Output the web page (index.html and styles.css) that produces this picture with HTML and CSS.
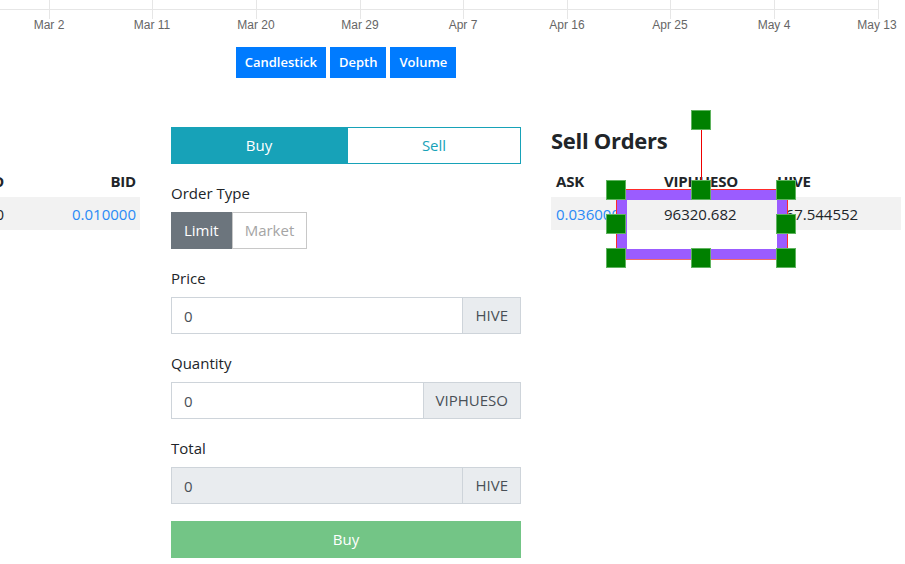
FILE: index.html
```html
<!DOCTYPE html>
<html lang="en">

<head>
    <meta charset="UTF-8">
    <meta name="viewport" content="width=device-width, initial-scale=1.0">
    <title>Market - VIPHUESO</title>
    <link rel="stylesheet" href="styles.css">
</head>

<body>
    <!-- 图表底部的时间轴 -->
    <svg class="chart-axis" width="905" height="36" viewBox="0 0 905 36">
        <g stroke="#e6e6e6" stroke-width="1">
            <line x1="0" y1="9.5" x2="879" y2="9.5" />
            <line x1="49.5" y1="0" x2="49.5" y2="19" />
            <line x1="152.5" y1="0" x2="152.5" y2="19" />
            <line x1="256.5" y1="0" x2="256.5" y2="19" />
            <line x1="360.5" y1="0" x2="360.5" y2="19" />
            <line x1="463.5" y1="0" x2="463.5" y2="19" />
            <line x1="567.5" y1="0" x2="567.5" y2="19" />
            <line x1="670.5" y1="0" x2="670.5" y2="19" />
            <line x1="774.5" y1="0" x2="774.5" y2="19" />
            <line x1="878.5" y1="0" x2="878.5" y2="19" />
        </g>
        <g class="axis-label" text-anchor="middle">
            <text x="49" y="29">Mar 2</text>
            <text x="152" y="29">Mar 11</text>
            <text x="256" y="29">Mar 20</text>
            <text x="360" y="29">Mar 29</text>
            <text x="463" y="29">Apr 7</text>
            <text x="567" y="29">Apr 16</text>
            <text x="670" y="29">Apr 25</text>
            <text x="774" y="29">May 4</text>
            <text x="877" y="29">May 13</text>
        </g>
    </svg>

    <div class="chart-tabs">
        <a href="javascript:;">Candlestick</a>
        <a href="javascript:;">Depth</a>
        <a href="javascript:;">Volume</a>
    </div>

    <div class="market">
        <!-- 买单 -->
        <div class="book">
            <h4>Buy Orders</h4>
            <table class="book-table buy">
                <thead>
                    <tr><th>HIVE</th><th>VIPHUESO</th><th>BID</th></tr>
                </thead>
                <tbody>
                    <tr><td>10.000000</td><td>1000.000</td><td class="price">0.010000</td></tr>
                </tbody>
            </table>
        </div>

        <!-- 下单表单 -->
        <div class="trade">
            <div class="side-toggle">
                <a href="javascript:;" class="active">Buy</a>
                <a href="javascript:;">Sell</a>
            </div>
            <div class="field">
                <label>Order Type</label>
                <div class="type-group">
                    <a href="javascript:;" class="active">Limit</a>
                    <a href="javascript:;">Market</a>
                </div>
            </div>
            <div class="field">
                <label>Price</label>
                <div class="input-group">
                    <input type="text" value="0">
                    <span>HIVE</span>
                </div>
            </div>
            <div class="field">
                <label>Quantity</label>
                <div class="input-group">
                    <input type="text" value="0">
                    <span>VIPHUESO</span>
                </div>
            </div>
            <div class="field">
                <label>Total</label>
                <div class="input-group">
                    <input type="text" value="0" disabled>
                    <span>HIVE</span>
                </div>
            </div>
            <a href="javascript:;" class="submit">Buy</a>
        </div>

        <!-- 卖单 -->
        <div class="book sell-book">
            <h4>Sell Orders</h4>
            <table class="book-table sell">
                <thead>
                    <tr><th>ASK</th><th>VIPHUESO</th><th>HIVE</th></tr>
                </thead>
                <tbody>
                    <tr><td class="price">0.036000</td><td>96320.682</td><td>467.544552</td></tr>
                </tbody>
            </table>
        </div>
    </div>

    <!-- 编辑器选中框 -->
    <div class="rotate-line"></div>
    <div class="selection"><div class="selection-inner"></div></div>
    <div class="handle h-rotate"></div>
    <div class="handle h-tl"></div>
    <div class="handle h-tc"></div>
    <div class="handle h-tr"></div>
    <div class="handle h-ml"></div>
    <div class="handle h-mr"></div>
    <div class="handle h-bl"></div>
    <div class="handle h-bc"></div>
    <div class="handle h-br"></div>
</body>

</html>
```

FILE: styles.css
```css
* {
    margin: 0;
    padding: 0;
    box-sizing: border-box;
}

body {
    width: 905px;
    height: 564px;
    overflow: hidden;
    font-family: "Open Sans", "Noto Sans", sans-serif;
    font-size: 15px;
    color: #212529;
    background-color: #fff;
}

a {
    text-decoration: none;
    color: inherit;
}

.chart-axis {
    display: block;
}

.axis-label {
    font-family: "Liberation Sans", Arial, sans-serif;
    font-size: 12px;
    fill: #666;
}

.chart-tabs {
    display: flex;
    justify-content: center;
    gap: 4px;
    width: 350px;
    margin: 11px 0 0 171px;
}

.chart-tabs a {
    height: 31px;
    line-height: 31px;
    padding: 0 9px;
    font-size: 13px;
    font-weight: 600;
    color: #fff;
    background-color: #007bff;
}

.market {
    display: flex;
    gap: 31px;
    margin: 49px 0 0 -210px;
}

.book,
.trade {
    flex: none;
    width: 350px;
}

.sell-book {
    margin-left: -1px;
}

.book h4 {
    height: 26px;
    line-height: 26px;
    font-size: 22px;
    font-weight: 700;
    letter-spacing: -0.3px;
    margin-bottom: 11px;
}

.book-table {
    width: 100%;
    border-collapse: collapse;
    table-layout: fixed;
}

.book-table th,
.book-table td {
    height: 33px;
    padding: 0 5px;
    white-space: nowrap;
    overflow: hidden;
}

.book-table th {
    font-size: 15px;
    font-weight: 700;
    letter-spacing: -0.2px;
}

.book-table tbody tr {
    background-color: #f2f2f2;
}

.book-table .price {
    color: #2a8af6;
}

.buy th,
.buy td {
    text-align: right;
    padding-right: 4px;
}

.buy th:nth-child(1) {
    width: 108px;
}

.buy th:nth-child(2) {
    width: 110px;
}

.sell th,
.sell td {
    text-align: left;
}

.sell th:nth-child(1) {
    width: 108px;
}

.sell th:nth-child(2) {
    width: 113px;
}

.side-toggle {
    display: flex;
    height: 37px;
}

.side-toggle a {
    flex: 1;
    line-height: 35px;
    text-align: center;
    color: #17a2b8;
    border: 1px solid #17a2b8;
}

.side-toggle a.active {
    flex: 0 0 176px;
    color: #fff;
    background-color: #17a2b8;
}

.field {
    margin-top: 18px;
}

.field label {
    display: block;
    height: 22px;
    line-height: 22px;
    margin-bottom: 8px;
}

.type-group {
    display: flex;
}

.type-group a {
    height: 37px;
    line-height: 35px;
    padding: 0 12px;
    color: #a5a5a5;
    border: 1px solid #c8c8c8;
}

.type-group a.active {
    color: #fff;
    background-color: #6c757d;
    border-color: #6c757d;
}

.input-group {
    display: flex;
    height: 37px;
}

.input-group input {
    flex: 1;
    min-width: 0;
    height: 37px;
    padding: 0 12px;
    font: inherit;
    color: #495057;
    border: 1px solid #ced4da;
    outline: none;
}

.input-group input:disabled {
    background-color: #e9ecef;
}

.input-group span {
    line-height: 35px;
    padding: 0 12px;
    color: #495057;
    background-color: #e9ecef;
    border: 1px solid #ced4da;
    border-left: 0;
}

.submit {
    display: block;
    height: 37px;
    line-height: 37px;
    margin-top: 17px;
    text-align: center;
    color: #fff;
    background-color: #73c586;
}

/* 选中框和控制点 */
.selection {
    position: absolute;
    left: 616px;
    top: 189px;
    width: 172px;
    height: 71px;
    border: 1px solid #ff2a2a;
    border-bottom-color: #f26a6a;
}

.selection-inner {
    width: 100%;
    height: 100%;
    border: 10px solid #9b5cff;
}

.rotate-line {
    position: absolute;
    left: 701px;
    top: 129px;
    width: 1px;
    height: 61px;
    background-color: #e00;
}

.handle {
    position: absolute;
    width: 20px;
    height: 20px;
    background-color: #008000;
    border: 1px solid #5fb35f;
}

.h-rotate { left: 691px; top: 110px; }
.h-tl { left: 606px; top: 180px; }
.h-tc { left: 691px; top: 180px; }
.h-tr { left: 776px; top: 180px; }
.h-ml { left: 606px; top: 214px; }
.h-mr { left: 776px; top: 214px; }
.h-bl { left: 606px; top: 248px; }
.h-bc { left: 691px; top: 248px; }
.h-br { left: 776px; top: 248px; }
```
